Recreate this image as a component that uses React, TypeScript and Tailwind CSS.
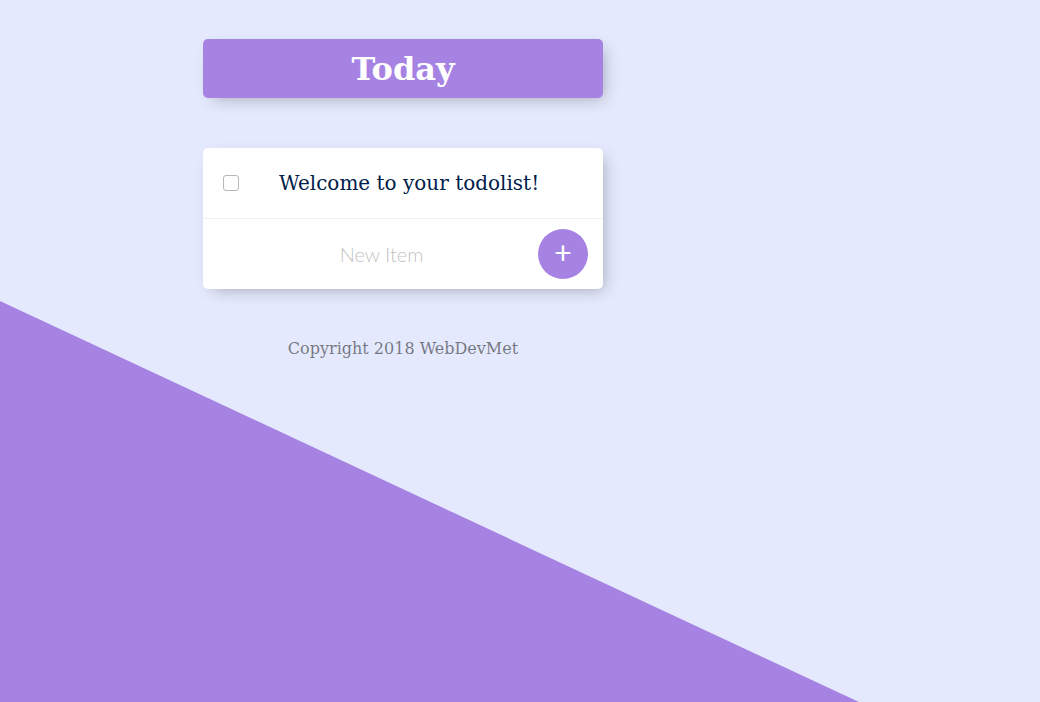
import { useState } from "react";

export default function App() {
    const [items] = useState(["Welcome to your todolist!"]);

    return (
        <div className="relative w-full h-[702px] overflow-hidden bg-[#E4E9FD] font-['DejaVu_Serif',serif]">
            {/* diagonal background wedge */}
            <div className="absolute inset-0 bg-[#A683E3] [clip-path:polygon(0_301px,859px_702px,0_702px)]" />

            <div className="relative ml-[203px] w-[400px] pt-[39px]">
                <div className="h-[59px] rounded-[5px] bg-[#A683E3] flex items-center justify-center shadow-[5px_5px_15px_-5px_rgba(0,0,0,0.3)]">
                    <h1 className="text-[32px] font-bold text-white leading-none">Today</h1>
                </div>

                <div className="mt-[50px] rounded-[5px] bg-white shadow-[5px_5px_15px_-5px_rgba(0,0,0,0.3)]">
                    {items.map((item, index) => (
                        <div key={index} className="min-h-[71px] flex items-center border-b border-[#F1F1F1]">
                            <input
                                type="checkbox"
                                className="appearance-none m-[20px] w-4 h-4 rounded-[3px] border border-[#bcb6b0] bg-white"
                            />
                            <p className="p-[20px] text-[20px] text-[#00204a] leading-[23px]">{item}</p>
                        </div>
                    ))}
                    <form className="min-h-[70px] flex items-center ml-[20px]">
                        <input
                            type="text"
                            placeholder="New Item"
                            className="h-[60px] w-[313px] pl-[4px] text-center text-[20px] font-light font-['Lato',sans-serif] outline-none placeholder:text-[rgba(128,128,128,0.5)]"
                        />
                        <button
                            type="button"
                            className="ml-[2px] w-[50px] h-[50px] rounded-full bg-[#A683E3] text-white text-[30px] font-normal font-['Lato',sans-serif] leading-none pb-[5px] flex items-center justify-center"
                        >
                            +
                        </button>
                    </form>
                </div>

                <footer className="mt-[50px] text-center text-[16px] leading-[19px] text-[rgba(0,0,0,0.5)]">
                    Copyright 2018 WebDevMet
                </footer>
            </div>
        </div>
    );
}
